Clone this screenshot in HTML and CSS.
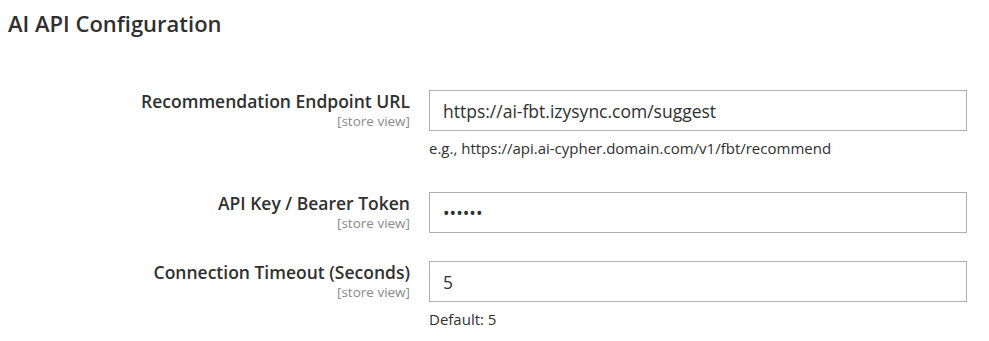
FILE: index.html
```html
<!DOCTYPE html>
<html>
<head>
    <title>AI API Configuration</title>
    <link rel="stylesheet" href="styles.css">
</head>
<body>

<div class="section">
    <div class="section-title">AI API Configuration</div>

    <div class="form">

        <div class="row">
            <div class="label">
                <span class="label-text">Recommendation Endpoint URL</span>
                <span class="scope">[store view]</span>
            </div>
            <div class="value">
                <input class="input" type="text" value="https://ai-fbt.izysync.com/suggest">
                <div class="note">e.g., https://api.ai-cypher.domain.com/v1/fbt/recommend</div>
            </div>
        </div>

        <div class="row">
            <div class="label">
                <span class="label-text">API Key / Bearer Token</span>
                <span class="scope">[store view]</span>
            </div>
            <div class="value">
                <input class="input" type="password" value="secret">
            </div>
        </div>

        <div class="row">
            <div class="label">
                <span class="label-text">Connection Timeout (Seconds)</span>
                <span class="scope">[store view]</span>
            </div>
            <div class="value">
                <input class="input" type="text" value="5">
                <div class="note">Default: 5</div>
            </div>
        </div>

    </div>
</div>

</body>
</html>
```

FILE: styles.css
```css
body {
    font-family: 'Open Sans', 'Liberation Sans', sans-serif;
    background-color: #fff;
    color: #303030;
    margin: 0;
    padding: 0 8px;
}

.section-title {
    font-size: 22px;
    font-weight: 600;
    color: #303030;
    line-height: 30px;
    padding-top: 8px;
    margin-bottom: 52px;
}

.form {
    display: flex;
    flex-direction: column;
    gap: 28px;
}

.row {
    display: grid;
    grid-template-columns: 402px 538px;
    column-gap: 19px;
}

.label {
    display: flex;
    flex-direction: column;
    align-items: flex-end;
    text-align: right;
}

.label-text {
    font-size: 17.5px;
    font-weight: 600;
    line-height: 22px;
}

.scope {
    font-size: 13.5px;
    color: #8a8a8a;
    line-height: 18px;
    margin-top: 0;
}

.input {
    display: block;
    box-sizing: border-box;
    width: 100%;
    height: 41px;
    border: 1px solid #adadad;
    border-radius: 0;
    padding: 0 13px;
    font-family: inherit;
    font-size: 17.5px;
    color: #303030;
    background: #fff;
    outline: none;
}

.note {
    font-size: 15px;
    line-height: 20px;
    margin: 7px 0 6px;
}
```
